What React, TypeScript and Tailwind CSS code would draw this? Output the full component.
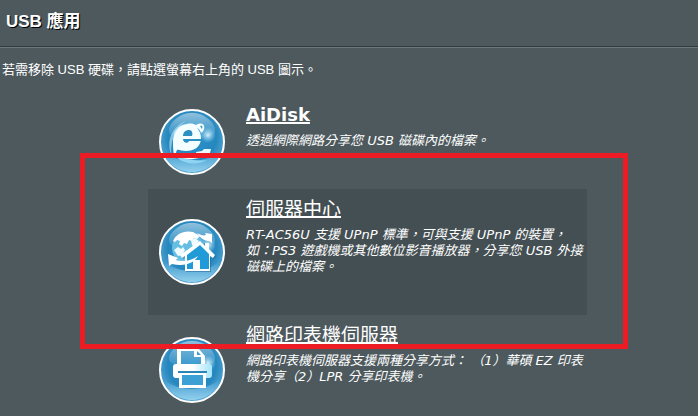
import type { ReactNode } from "react";

function Badge({ id, children }: { id: string; children: ReactNode }) {
  return (
    <svg viewBox="0 0 66 66" className="size-[66px] shrink-0" aria-hidden="true">
      <defs>
        <radialGradient id={id + "-bg"} cx="50%" cy="42%" r="58%">
          <stop offset="0" stopColor="#2b96cd" />
          <stop offset="0.65" stopColor="#2587be" />
          <stop offset="1" stopColor="#5fa9d5" />
        </radialGradient>
        <linearGradient id={id + "-gloss"} x1="0" y1="0" x2="0" y2="1">
          <stop offset="0" stopColor="#a4cbe2" stopOpacity="0.85" />
          <stop offset="1" stopColor="#7bb9dd" stopOpacity="0.2" />
        </linearGradient>
        <linearGradient id={id + "-low"} x1="0" y1="0" x2="0" y2="1">
          <stop offset="0" stopColor="#2f90c6" />
          <stop offset="1" stopColor="#93d0ee" />
        </linearGradient>
        <radialGradient id={id + "-spot"}>
          <stop offset="0" stopColor="#d4effb" />
          <stop offset="1" stopColor="#8fd0ee" stopOpacity="0" />
        </radialGradient>
      </defs>
      <circle cx="33" cy="33" r="32" fill={`url(#${id}-bg)`} stroke="#fff" strokeWidth="2" />
      <path d="M3 39C12 56 53 56 63 39C60 54 47 63 33 63S6 54 3 39z" fill={`url(#${id}-low)`} />
      <path d="M12 15C23 0 43 0 54 15C61 27 50 29 33 29S5 27 12 15z" fill={`url(#${id}-gloss)`} />
      <circle cx="49" cy="26" r="8" fill={`url(#${id}-spot)`} />
      {children}
    </svg>
  );
}

function BrowserIcon() {
  return (
    <Badge id="browser">
      <path d="M14 42C20 49 34 53 48 51C36 58 17 54 14 42z" fill="#8fd5f3" />
      <path
        d="M28 15c4-1 7 0 9 1 4-2 7-2 8 1s-1 6-3 7c-1-3-2-4-4-5 3 3 4 7 4 10H42c0 9-7 13-15 13-5 0-7-2-9-1-1 2-2 4-1 6-3-2-3-8-3-13 0-3 0-5 1-8-1-4 5-10 13-11z"
        fill="#f4fdff"
      />
      <path d="M24 27c0-4 3-6 6-6s4 3 3 6zM24 30h18v2H30c-1 3-6 2-6-2z" fill="#2d90c5" />
      <path d="M41 17c2-1 3 0 2 3z" fill="#3597ca" />
      <path d="M37 43l6-1 2-2h7l-1 4-3 3H38z" fill="#e9fbff" />
      <path d="M12 45C7 30 14 17 27 12C17 19 12 29 12 45z" fill="#a9dcf2" opacity="0.7" />
      <path d="M16 43c7 5 15 7 25 6-12 3-21 0-25-6z" fill="#fff" />
    </Badge>
  );
}

function HomeServerIcon() {
  return (
    <Badge id="home">
      <circle cx="29" cy="29" r="16" fill="#66bfe2" />
      <path d="M14 22c3-7 11-11 20-9l7 4-3 3-3-1-2 3-3-1-2 4-3-1-2 3-3-2 1-3-3-1-2 2z" fill="#fff" />
      <path d="M15 31l4-3 3 2 2-2 2 3-3 5-4 1zM32 21l4-2 4 3-5 6-2-2z" fill="#f0fbff" />
      <path d="M38 14c4 2 6 3 9 2l-1-2 7 1v9l-3-2c-4 0-8-2-12-8z" fill="#fff" />
      <path d="M41 23L22 37l2 3 3-2v15h25V38l3 2 2-3-7-6v-7h-5v3z" fill="#1c6594" opacity="0.5" />
      <path d="M41 22L21 36l2 3 3-2v15h25V37l3 2 2-3-6-6v-6h-4v3z" fill="#fff" />
      <path d="M41 26L28 36v14h6v-9h7v9h9V35z" fill="#219bd8" />
      <path d="M9 35l1 12 3-2c13 3 22-1 26-8-7 5-15 6-22 4l2-2z" fill="#fff" />
    </Badge>
  );
}

function PrinterIcon() {
  return (
    <Badge id="printer">
      <defs>
        <linearGradient id="printer-body" x1="0" y1="0" x2="1" y2="0">
          <stop offset="0.5" stopColor="#fff" />
          <stop offset="1" stopColor="#a5e4fa" />
        </linearGradient>
      </defs>
      <path d="M18 28V11h21l7 8v9h-4v-8h-7v-6H22v14z" fill="#fff" />
      <path d="M38 14v4h4z" fill="#3a9cd0" />
      <path d="M17 27h33q3 0 3 3v8q0 3-3 3H17q-3 0-3-3v-8q0-3 3-3z" fill="url(#printer-body)" />
      <path d="M19 34h29v2H19z" fill="#2c83b5" />
      <path d="M20 36h27v15H20z" fill="#fff" />
      <path d="M23 38h21v10H23z" fill="#3da0d4" />
    </Badge>
  );
}

type ServiceProps = { icon: ReactNode; title: string; latin?: boolean; active?: boolean; children: ReactNode };

function Service({ icon, title, latin, active, children }: ServiceProps) {
  return (
    <li className={`flex items-center pl-[11px] ${active ? "bg-[#444f53]" : ""}`}>
      {icon}
      <div className="ml-[21px] min-w-0 flex-1 pt-2 pb-10">
        <h2 className={`leading-6 ${latin ? "text-lg/6 font-bold" : "text-[19px] font-normal"}`}>
          <a
            href="#"
            className={`underline decoration-2 [text-decoration-skip-ink:none] ${latin ? "underline-offset-1" : "underline-offset-0"}`}
          >
            {title}
          </a>
        </h2>
        <p className="mt-1.5 text-[13px] leading-4 italic">{children}</p>
      </div>
    </li>
  );
}

export default function App() {
  return (
    <main className="min-h-screen overflow-hidden bg-[#4d595d] font-['Liberation_Sans','Noto_Sans_CJK_TC',sans-serif] text-white">
      <h1 className="border-b border-[#2f3a3e] px-1.5 pt-2.5 pb-3 text-[17px] leading-6 font-bold [text-shadow:1px_1px_0_#000]">
        USB 應用
      </h1>
      <p className="border-t border-[#6b787c] px-0.5 pt-3.5 text-[13px] leading-4">
        若需移除 USB 硬碟，請點選螢幕右上角的 USB 圖示。
      </p>
      <div className="relative mt-[17px] pl-[148px]">
        <ul className="w-full max-w-[439px] font-['DejaVu_Sans','Noto_Sans_CJK_TC',sans-serif]">
          <Service icon={<BrowserIcon />} title="AiDisk" latin>
            透過網際網路分享您 USB 磁碟內的檔案。
          </Service>
          <Service icon={<HomeServerIcon />} title="伺服器中心" active>
            RT-AC56U 支援 UPnP 標準，可與支援 UPnP 的裝置，如：PS3 遊戲機或其他數位影音播放器，分享您 USB 外接磁碟上的檔案。
          </Service>
          <Service icon={<PrinterIcon />} title="網路印表機伺服器">
            網路印表機伺服器支援兩種分享方式： （1）華碩 EZ 印表機分享（2）LPR 分享印表機。
          </Service>
        </ul>
        <div className="pointer-events-none absolute top-[58px] left-20 h-[196px] w-[548px] border-[5px] border-[#ed1c24]" />
      </div>
    </main>
  );
}
